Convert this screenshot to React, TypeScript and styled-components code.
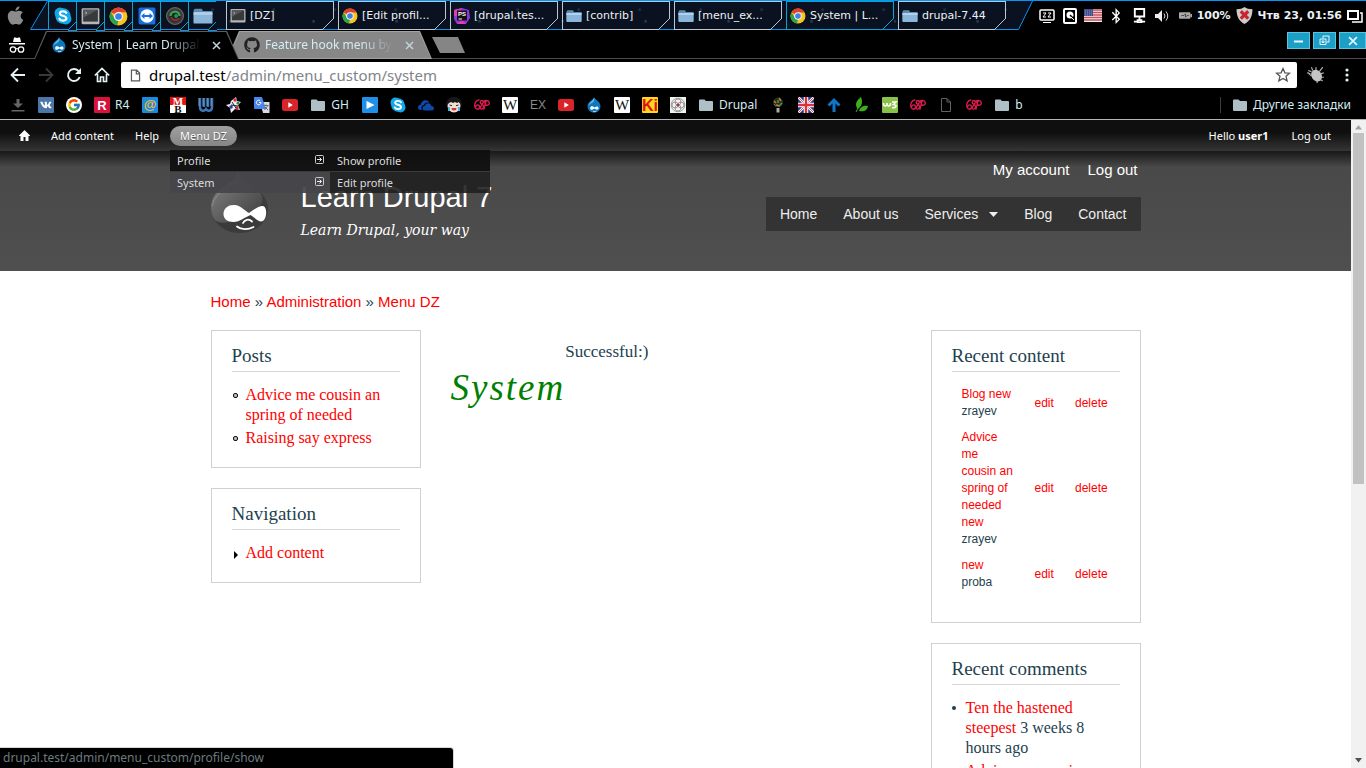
import React from 'react';
import styled, { createGlobalStyle } from 'styled-components';
import { FaApple, FaGithub, FaVk, FaBluetoothB } from 'react-icons/fa';
import { FcGoogle } from 'react-icons/fc';

const UI = '"Noto Sans", "Open Sans", sans-serif';
const ARIAL = '"Liberation Sans", Arial, sans-serif';
const SERIF = '"Liberation Serif", serif';
const PANEL = '"DejaVu Sans", Verdana, sans-serif';

const GlobalStyle = createGlobalStyle`
  *, *::before, *::after { box-sizing: border-box; }
  body { margin: 0; background: #fff; }
  button { margin: 0; padding: 0; border: 0; background: none; color: inherit; font: inherit; }
  a { text-decoration: none; color: inherit; }
  ul, h1, h2, p { margin: 0; padding: 0; font-weight: normal; }
  ul { list-style: none; }
  svg { display: block; flex: none; }
`;

const Desktop = styled.div`
  display: flex;
  flex-direction: column;
  height: 100vh;
  overflow: hidden;
  position: relative;
`;

/* ---------- desktop panel ---------- */

const Panel = styled.header`
  display: flex;
  height: 30px;
  flex: none;
  background: #000;
  border-top: 1px solid #0795f3;
  font: 11px/28px ${PANEL};
  color: #eaf2f5;
`;

const AppleButton = styled.button`
  width: 30px;
  display: grid;
  place-items: center;
  color: #8b8b8b;
`;

const TaskArea = styled.div`
  display: flex;
  min-width: 0;
  padding-right: 4px;
  border-bottom: 1px solid #0795f3;
  background:
    radial-gradient(circle at 20% 70%, #24364a 0 1px, transparent 2px) 0 0 / 83px 29px,
    radial-gradient(circle at 70% 30%, #1d2c40 0 1px, transparent 2px) 0 0 / 61px 29px,
    #0a1120;
`;

const Launchers = styled.div`
  display: flex;
  margin-right: 10px;
`;

const CutButton = styled.button<{ $edge: string; $cut: number }>`
  position: relative;
  display: flex;
  align-items: center;
  border: 1px solid ${(p) => p.$edge};
  height: 29px;
  &::after {
    content: '';
    position: absolute;
    right: -1px;
    bottom: -1px;
    width: ${(p) => p.$cut}px;
    height: ${(p) => p.$cut}px;
    background: linear-gradient(135deg, transparent calc(50% - 1px), ${(p) => p.$edge} calc(50% - 1px), ${(p) => p.$edge} 50%, #0a1120 50%);
    border-bottom: 1px solid #0795f3;
  }
`;

const Launcher = styled(CutButton)`
  width: 28px;
  justify-content: center;
  border-width: 1px 0 0 1px;
`;

const Task = styled(CutButton)`
  width: 108px;
  margin-right: 4px;
  padding-left: 3px;
  gap: 4px;
  white-space: nowrap;
`;

const Tray = styled.div`
  display: flex;
  align-items: center;
  margin-left: auto;
  padding-right: 3px;
  font-weight: bold;
  white-space: nowrap;
`;

const TraySlot = styled.span`
  width: 23px;
  display: grid;
  place-items: center;
`;

const TrayGroup = styled.span`
  display: flex;
  align-items: center;
  gap: 5px;
`;

/* ---------- browser chrome ---------- */

const TabStrip = styled.div`
  display: flex;
  flex: none;
  height: 29px;
  padding-top: 1px;
  background: #000;
  box-shadow: inset 0 -1px #4a4a4a;
  font: 12px/28px ${UI};
  color: #d3ecf3;
`;

const Incognito = styled.div`
  width: 34px;
  display: grid;
  place-items: center;
`;

const Tab = styled.div<{ $active?: boolean }>`
  position: relative;
  z-index: ${(p) => (p.$active ? 2 : 1)};
  display: flex;
  align-items: center;
  width: 205px;
  margin-right: ${(p) => (p.$active ? '-12px' : '0')};
  padding-left: 17px;
  &::before, &::after {
    content: '';
    position: absolute;
    inset: 0;
    z-index: -1;
    clip-path: polygon(12px 0, calc(100% - 12px) 0, 100% 100%, 0 100%);
    background: ${(p) => (p.$active ? '#5c5c5c' : '#a2a2a2')};
  }
  &::after {
    inset: 1px 1px ${(p) => (p.$active ? '0' : '1px')};
    background: ${(p) => (p.$active ? '#000' : '#878787')};
  }
`;

const TabTitle = styled.span`
  width: 129px;
  margin-left: 5px;
  overflow: hidden;
  white-space: nowrap;
  mask-image: linear-gradient(90deg, #000 74%, transparent);
`;

const TabClose = styled.button`
  margin-left: 11px;
  color: #c3d4d8;
`;

const NewTab = styled.button`
  width: 33px;
  height: 16px;
  margin-top: 6px;
  background: #858585;
  clip-path: polygon(0 0, 26px 0, 33px 100%, 8px 100%);
`;

const WindowButtons = styled.div`
  display: flex;
  gap: 3px;
  height: 17px;
  margin: 1px 0 0 auto;
`;

const WindowButton = styled.button<{ $wide?: boolean }>`
  width: ${(p) => (p.$wide ? 27 : 23)}px;
  display: grid;
  place-items: center;
  border: 1px solid #5cc2df;
  background: #1c9fc7;
  color: #e6f6fb;
`;

const Toolbar = styled.div`
  display: flex;
  flex: none;
  align-items: center;
  height: 32px;
  padding: 0 8px 0 4px;
  background: #000;
  color: #e2f1f4;
`;

const ToolButton = styled.button`
  width: 28px;
  height: 26px;
  display: grid;
  place-items: center;
  &:disabled { color: #363a3b; }
`;

const Omnibox = styled.label`
  position: relative;
  display: flex;
  align-items: center;
  flex: 1;
  height: 26px;
  margin: 0 5px;
  padding: 0 6px 0 8px;
  background: #fff;
  border-radius: 2px;
  color: #5a5a5a;
`;

const AddressText = styled.span`
  flex: 1;
  margin-left: 7px;
  font: 15px/24px ${UI};
  color: #808488;
  b { font-weight: normal; color: #000; }
`;

const AddressInput = styled.input`
  position: absolute;
  inset: 0 30px 0 28px;
  border: 0;
  background: transparent;
  color: transparent;
  font: 15px/24px ${UI};
  outline: none;
`;

const Bookmarks = styled.nav`
  display: flex;
  flex: none;
  align-items: center;
  gap: 12px;
  height: 29px;
  padding: 0 14px 0 10px;
  background: #000;
  border-bottom: 1px solid #b3b3b3;
  font: 12px/28px ${UI};
  color: #d3ecf3;
  white-space: nowrap;
`;

const Bookmark = styled.a`
  display: flex;
  align-items: center;
  gap: 5px;
  span { padding-right: 1px; }
`;

const OtherBookmarks = styled(Bookmark)`
  margin-left: auto;
  padding-left: 11px;
  height: 16px;
  line-height: 16px;
  border-left: 1px solid #3c3c3c;
`;

/* ---------- page ---------- */

const Viewport = styled.div`
  display: flex;
  flex: 1;
  min-height: 0;
`;

const Page = styled.div`
  flex: 1;
  min-width: 0;
  overflow: hidden;
  background: #fff;
  color: #233f50;
`;

const ScrollTrack = styled.div`
  display: flex;
  flex-direction: column;
  align-items: center;
  width: 15px;
  padding: 5px 0;
  background: #f1f1f1;
`;

const ScrollThumb = styled.div`
  width: 11px;
  height: 55%;
  margin: 3px 0 auto;
  background: #c1c1c1;
`;

const AdminBar = styled.nav`
  position: relative;
  z-index: 2;
  display: flex;
  align-items: center;
  gap: 1px;
  height: 31px;
  padding: 0 10px 0 9px;
  background: linear-gradient(#0f0f0f 40%, #353535);
  font: 11px/20px ${UI};
  color: #fff;
`;

const AdminLink = styled.a<{ $open?: boolean }>`
  display: flex;
  align-items: center;
  height: 20px;
  padding: 0 10px;
  border-radius: 10px;
  background: ${(p) => (p.$open ? 'linear-gradient(#a0a0a0, #858585)' : 'none')};
  text-shadow: ${(p) => (p.$open ? '0 1px #555' : 'none')};
`;

const AdminMenuItem = styled.div`
  position: relative;
`;

const DropMenu = styled.ul`
  position: absolute;
  top: 24px;
  left: 0;
  width: 160px;
  line-height: 22px;
  color: #ddd;
`;

const SubMenu = styled.ul`
  position: absolute;
  top: 0;
  left: 160px;
  width: 160px;
`;

const DropItem = styled.li<{ $tone: string }>`
  display: flex;
  justify-content: space-between;
  height: 22px;
  padding: 0 6px 0 7px;
  border-bottom: 1px solid rgba(70, 70, 70, 0.8);
  background: ${(p) => p.$tone};
  &:nth-child(2) { height: 21px; border-bottom: 0; }
  svg { margin-top: 5px; }
`;

const AccountLinks = styled.div`
  display: flex;
  gap: 3px;
  margin-left: auto;
`;

const SiteHeader = styled.header`
  height: 120px;
  background: linear-gradient(#181818, rgba(24, 24, 24, 0) 16px), linear-gradient(#484848, #4f4f4f);
`;

const Container = styled.div`
  width: 930px;
  max-width: 100%;
  margin: 0 auto;
`;

const Branding = styled(Container)`
  display: flex;
  padding-top: 19px;
  color: #fff;
`;

const SiteName = styled.div`
  margin-left: 33px;
  h1 { font: 29px/32px ${ARIAL}; margin-top: 11px; }
  p { font: italic 14px/20px "DejaVu Serif", serif; margin-top: 7px; }
`;

const HeaderMenus = styled.div`
  display: flex;
  flex-direction: column;
  align-items: flex-end;
  margin-left: auto;
`;

const UserMenu = styled.nav`
  display: flex;
  gap: 18px;
  margin: -9px 3px 18px 0;
  font: 15px/18px ${ARIAL};
`;

const MainMenu = styled.nav`
  display: flex;
  align-items: center;
  height: 34px;
  padding: 0 14px;
  gap: 26px;
  background: #333;
  color: #eee;
  font: 14px/34px ${ARIAL};
  a { display: flex; align-items: center; gap: 11px; }
`;

const Breadcrumb = styled(Container)`
  padding: 20px 0 18px;
  font: 15px/21px ${ARIAL};
`;

const RedLink = styled.a`
  color: #f00;
`;

const Columns = styled(Container)`
  display: grid;
  grid-template-columns: 210px minmax(0, 1fr) 210px;
  gap: 30px;
  align-items: start;
`;

const Sidebar = styled.aside`
  display: flex;
  flex-direction: column;
  gap: 20px;
`;

const Block = styled.section`
  border: 1px solid #d0d0d0;
  padding: 14px 20px 19px;
  font: 16px/20px ${SERIF};
  h2 {
    padding-bottom: 4px;
    border-bottom: 1px solid #d6d6d6;
    font: 19px/22px ${SERIF};
  }
  ul {
    display: flex;
    flex-direction: column;
    gap: 3px;
    margin-top: 13px;
  }
`;

const ListItem = styled.li`
  position: relative;
  padding-left: 14px;
  > svg { position: absolute; left: 0; top: 8px; }
`;

const ContentTable = styled.table`
  width: 100%;
  margin: 10px 0 7px;
  border-collapse: collapse;
  font: 12px/17px ${ARIAL};
  td { padding: 4px 10px 5px; vertical-align: middle; }
  td:first-child { width: 73px; }
  td + td { padding-right: 9px; }
`;

const Main = styled.main`
  display: flex;
  align-items: flex-start;
  padding-top: 10px;
  font: 17px/24px ${SERIF};
  h1 { margin-top: 28px; color: #008000; font: italic 37px/40px ${SERIF}; letter-spacing: 2px; }
`;

const StatusBubble = styled.div`
  position: absolute;
  left: 0;
  bottom: 0;
  width: 34%;
  max-width: 453px;
  height: 20px;
  padding-left: 3px;
  background: #000;
  border-radius: 0 3px 0 0;
  box-shadow: 0 0 0 1px #d5d5d5;
  color: #6d7a7e;
  font: 12px/19px ${UI};
  white-space: nowrap;
`;

/* ---------- drawings ---------- */

type S = { size?: number };

const Icon = ({ size = 16, vb = 16, children }: { size?: number; vb?: number; children: React.ReactNode }) => (
  <svg width={size} height={size} viewBox={`0 0 ${vb} ${vb}`} fill="none" aria-hidden="true">{children}</svg>
);

const Chrome = ({ size = 16 }: S) => (
  <Icon size={size}>
    <circle cx="8" cy="8" r="7.5" fill="#f8c51c" />
    <path d="M8 8 1.5 4.2A7.5 7.5 0 0 1 14.5 4.4H8z" fill="#e0402f" />
    <path d="M1.5 4.2 5 10 8 11.4 6.9 15.4A7.5 7.5 0 0 1 1.5 4.2z" fill="#2ba24c" />
    <circle cx="8" cy="8" r="3.8" fill="#f4f4f4" />
    <circle cx="8" cy="8" r="2.8" fill="#3f7fe8" />
  </Icon>
);

const Terminal = ({ size = 16 }: S) => (
  <Icon size={size}>
    <rect x=".5" y="1" width="15" height="13.5" rx="1" fill="#b7b7b7" />
    <rect x="1.8" y="2.3" width="12.4" height="10" fill="#37393b" />
    <path d="M1.8 2.3h12.4L1.8 9z" fill="#55585a" />
    <path d="m3.5 4 1.500 1-1.500 1" stroke="#bbb" strokeWidth=".7" />
  </Icon>
);

const BlueFolder = ({ size = 16 }: S) => (
  <Icon size={size}>
    <path d="M.5 3.2V13h15V4H8L7 2.2H1.5z" fill="#5b8db6" />
    <rect x=".5" y="5" width="15" height="9" fill="#8bb6da" />
    <path d="M.5 5h15v2H.5z" fill="#b3d2ea" />
  </Icon>
);

const SkypeMark = ({ size = 16 }: S) => (
  <Icon size={size}>
    <circle cx="5.4" cy="5.4" r="4.9" fill="#12a9ea" />
    <circle cx="10.6" cy="10.6" r="4.9" fill="#12a9ea" />
    <circle cx="8" cy="8" r="6.8" fill="#12a9ea" />
    <path d="M11 5.2C9.9 3.3 5.2 3.4 5.2 5.7c0 2.700 5.800 1.300 5.800 4.400 0 2.700-5.300 2.600-6.200.300" stroke="#fff" strokeWidth="1.900" strokeLinecap="round" />
  </Icon>
);

const TeamViewer = () => (
  <Icon size={18}>
    <rect x=".5" y=".5" width="15" height="15" rx="1.500" fill="#1470dc" />
    <circle cx="8" cy="8" r="6" fill="#fff" />
    <path d="m2.700 8 3-2.600v1.700h4.600V5.400l3 2.600-3 2.600V8.900H5.700v1.700z" fill="#1470dc" />
  </Icon>
);

const Camera = () => (
  <Icon size={18}>
    <circle cx="8" cy="8" r="7.500" fill="#3c3b3c" stroke="#676767" />
    <circle cx="8" cy="8" r="5" fill="#162a20" />
    <path d="M4 8a4 4 0 0 1 8 0" stroke="#41a349" strokeWidth="2" />
    <path d="M4.500 9a4 4 0 0 0 7 1" stroke="#a62d22" strokeWidth="1.500" />
    <circle cx="9" cy="8" r="1.700" fill="#258d86" />
  </Icon>
);

const Mark = ({ bg, fg, children, w = 'bold', family = ARIAL, fs = 12 }: { bg?: string; fg: string; children: string; w?: string; family?: string; fs?: number }) => (
  <Icon>
    {bg && <rect width="16" height="16" rx="1" fill={bg} />}
    <text x="8" y={8 + fs * 0.36} textAnchor="middle" fontSize={fs} fontWeight={w} fontFamily={family} fill={fg}>{children}</text>
  </Icon>
);

const PhpStorm = () => (
  <Icon>
    <path d="M0 2 8 0l7 2 1 8-4 6H3L0 11z" fill="#8d35dc" />
    <path d="M0 2 8 0 4 8H0zM12 16H3l5-4z" fill="#e13bb5" />
    <rect x="3" y="2.500" width="10" height="10" fill="#111" />
    <text x="8" y="8" textAnchor="middle" fontSize="6" fontWeight="bold" fontFamily={ARIAL} fill="#fff">PS</text>
    <path d="M4.500 11H8" stroke="#fff" />
  </Icon>
);

const GreyFolder = () => (
  <Icon><path d="M1 3.500A1 1 0 0 1 2 2.500h4.500L8 4h6a1 1 0 0 1 1 1v8a1 1 0 0 1-1 1H2a1 1 0 0 1-1-1z" fill="#afbfc6" /></Icon>
);

const YouTube = () => (
  <Icon><rect y="2" width="16" height="12" rx="2.500" fill="#d9252a" /><path d="m6.300 5.300 4.500 2.700-4.500 2.700z" fill="#fff" /></Icon>
);

const DrupalDrop = () => (
  <Icon>
    <path d="M8 .3C8.700 2.700 14.500 4 14.500 9.500A6.400 6.400 0 0 1 8 15.800 6.400 6.400 0 0 1 1.500 9.500C1.500 4.500 7.500 3 8 .3z" fill="#0d78bd" />
    <path d="M8 .3C8 4 3 5 2.500 9 4 5.500 10 6 8 .3z" fill="#75bde6" />
    <path d="M4.200 11.200c0-2.500 2.700-2.200 4.300-.7 1.700-1.300 4-1.700 4 .7 0 2-2.600 1.700-4 .4-1.600 1.500-4.300 1.700-4.300-.4z" fill="#fff" />
    <path d="M7 14.200c1 .5 2.300.5 3.300 0" stroke="#fff" strokeWidth=".8" />
  </Icon>
);

const Loops = () => (
  <Icon>
    <path d="M5 3C2 3 0 7 1 10s4 3 4.500.5S3.500 7 2 9M8 7C5.500 7 6 3.500 8 3.500s1.500 3-.5 5-1.500 4 .5 3.500 2-3.500 0-5M10 12l2-8c-2 0-1 3 0 4 2 1 4-1 3-3s-4-2-5-.5" stroke="#d81b4a" strokeWidth="1.400" strokeLinecap="round" />
  </Icon>
);

const Kaleido = () => (
  <Icon>
    <rect width="16" height="16" fill="#f2f2ee" />
    <g stroke="#777" strokeWidth=".7">
      <circle cx="8" cy="8" r="6.800" /><circle cx="8" cy="5" r="3" /><circle cx="8" cy="11" r="3" /><circle cx="5" cy="8" r="3" /><circle cx="11" cy="8" r="3" />
    </g>
    <circle cx="8" cy="8" r="1.300" fill="#bd3038" />
  </Icon>
);

const UkFlag = () => (
  <Icon>
    <rect width="16" height="16" fill="#26398c" />
    <path d="m0 0 16 16M16 0 0 16" stroke="#fff" strokeWidth="2.500" />
    <path d="m0 0 16 16M16 0 0 16" stroke="#d8333c" strokeWidth=".9" />
    <path d="M8 0v16M0 8h16" stroke="#fff" strokeWidth="4.500" />
    <path d="M8 0v16M0 8h16" stroke="#d8333c" strokeWidth="2.400" />
  </Icon>
);

const UsFlag = () => (
  <svg width="18" height="13" viewBox="0 0 18 13" aria-hidden="true">
    <rect width="18" height="13" fill="#eee" />
    <path d="M0 1h18M0 3.500h18M0 6h18M0 8.500h18M0 11h18" stroke="#c6505c" strokeWidth="1.300" />
    <rect width="9" height="7" fill="#3f4f8e" />
    <path d="M1 2h7M1 4h7M1 6h7" stroke="#a5aecd" strokeWidth=".7" strokeDasharray="1 1" />
  </svg>
);

const PageIcon = ({ color }: { color: string }) => (
  <Icon><path d="M3.500 1.500H9L12.500 5v9.500h-9zM9 1.500V5h3.500" stroke={color} /></Icon>
);

const AngleBox = () => (
  <svg width="9" height="9" viewBox="0 0 9 9" fill="none" aria-hidden="true">
    <rect x=".5" y=".5" width="8" height="8" rx="1" stroke="#ccc" />
    <path d="M2 4.500h4.500M4.500 2.500l2 2-2 2" stroke="#eee" />
  </svg>
);

const DrupalLogo = () => (
  <svg width="57" height="64" viewBox="0 0 57 64" aria-hidden="true">
    <defs>
      <linearGradient id="drop" x1="0" y1="0" x2="1" y2="1">
        <stop offset="0" stopColor="#868686" /><stop offset=".6" stopColor="#5a5a5a" /><stop offset="1" stopColor="#3c3c3c" />
      </linearGradient>
    </defs>
    <path d="M27 1c1 9 9 12 16 17 8 5 14 12 14 20 0 15-13 25-28.500 25S0 52 0 37c0-9 5-15 12-20C18 12 26 9 27 1z" fill="#3b3b3b" />
    <path d="M27 1c1 9 9 12 16 17 6 4 10 8 8 14-2 7-10 9-17 13C24 51 12 56 4 50 1 46 0 42 0 37c0-9 5-15 12-20C18 12 26 9 27 1z" fill="url(#drop)" />
    <path d="M27 2C26 16 5 18 1 36" fill="none" stroke="#a0a0a0" opacity=".6" />
    <path d="M12.500 44c0-6 5-9.500 11-9 6 .4 10 5.500 14.500 8 4.500-3 10-7.500 14-7 4.500 1 4 12 0 15-4 2-8-3.500-12.500-6C34 47 29 52 22.500 52c-6 0-10-3-10-8z" fill="#fff" />
    <path d="M32 53c1.500-3.500 6-4.500 9-1.500M26 56.500c4 3.500 11 3.500 16.500.5" fill="none" stroke="#fff" strokeWidth="1.800" strokeLinecap="round" />
  </svg>
);

const MailMark = () => (
  <Icon><rect width="16" height="16" rx="1" fill="#168de2" /><text x="8" y="12" textAnchor="middle" fontSize="13" fontWeight="bold" fontFamily={ARIAL} fill="#fcb52c">@</text></Icon>
);

const MbMark = () => (
  <Icon>
    <rect width="16" height="8" fill="#e01616" /><rect y="8" width="16" height="8" fill="#fff" />
    <text x="8" y="7.500" textAnchor="middle" fontSize="11" fontWeight="bold" fontFamily={SERIF} fill="#fff">M</text>
    <text x="8" y="15.500" textAnchor="middle" fontSize="11" fontWeight="bold" fontFamily={SERIF} fill="#111">B</text>
  </Icon>
);

const Download = () => (
  <Icon><path d="M6.500 2h3v4.500H13L8 11 3 6.500h3.500zM1.500 13h13v1.500h-13z" fill="#666" /></Icon>
);

const BlueW = () => (
  <Icon><path d="M2 1v9c0 4 4 5 6 2 2 3 6 2 6-2V1M6 1v9M10 1v9" stroke="#3f78b8" strokeWidth="2.500" /><path d="M1 1v8M5 1v8M9 1v8M13 1v8" stroke="#80aeda" strokeWidth=".8" /></Icon>
);

const Pinwheel = () => (
  <Icon>
    <path d="M5 4 10 0l1 4 4 1-3 3 2 5-5-1-4 4-1-5-4-3 4-1z" fill="#eee" />
    <circle cx="9" cy="3" r="1.700" fill="#db2556" /><circle cx="12" cy="6" r="1.600" fill="#278b3f" /><circle cx="5" cy="10" r="1.800" fill="#2639c5" /><circle cx="11" cy="11" r="1.700" fill="#cf2740" />
    <path d="m6 5 4 6M5 8l7 1" stroke="#222" />
  </Icon>
);

const Translate = () => (
  <Icon>
    <path d="M6 5h9.500v11H9z" fill="#d9dbdd" /><path d="M0 0h8l4 12H1a1 1 0 0 1-1-1z" fill="#4b86ee" />
    <path d="M7 5.500H5M7 5.500a2.300 2.300 0 1 1-.9-1.800" stroke="#fff" /><path d="M9.500 8.500h5M12 7.500v1M13.500 9l-3 4M11 10l3 3" stroke="#607080" />
  </Icon>
);

const Face = () => (
  <Icon>
    <circle cx="8" cy="9" r="6.500" fill="#f3ded2" /><path d="M0 9C0 2 4 0 8 0s8 2 8 9l-3-4-2 1-2-1-2 1-2-1-2 1z" fill="#15181a" />
    <path d="m3.500 8 2.500.7m6.500-.7-2.500.7" stroke="#222" /><path d="M5.500 11h5a2.500 2.500 0 0 1-5 0z" fill="#c83b3b" /><path d="M3 10v4m10-4v4" stroke="#47b6e2" strokeWidth="2" />
  </Icon>
);

const bookmarks: { name: string; icon: React.ReactNode; text?: string }[] = [
  { name: 'Downloads', icon: <Download /> },
  { name: 'VK', icon: <Icon><rect width="16" height="16" rx="1" fill="#4a76a8" /><FaVk x={2} y={2} size={12} color="#fff" /></Icon> },
  { name: 'Google', icon: <Icon><circle cx="8" cy="8" r="8" fill="#fff" /><FcGoogle x={1} y={1} size={14} /></Icon> },
  { name: 'R4', icon: <Mark bg="#d8113d" fg="#fff" fs={13}>R</Mark>, text: 'R4' },
  { name: 'Mail', icon: <MailMark /> },
  { name: 'MB', icon: <MbMark /> },
  { name: 'W', icon: <BlueW /> },
  { name: 'Pinwheel', icon: <Pinwheel /> },
  { name: 'Translate', icon: <Translate /> },
  { name: 'YouTube', icon: <YouTube /> },
  { name: 'GH', icon: <GreyFolder />, text: 'GH' },
  { name: 'Player', icon: <Icon><rect width="16" height="16" rx="1" fill="#1f8fe8" /><path d="m4.500 4 8 4-8 4z" fill="#fff" /></Icon> },
  { name: 'Skype', icon: <SkypeMark /> },
  { name: 'OneDrive', icon: <Icon><path d="M0 10.500C0 8.500 1.500 7.500 3 7.500c0-4 6-6 8.500-2-4-.5-5 1-5.500 2.500-2.500.3-3.200 3-2 5C1.500 13 0 12.500 0 10.500z" fill="#0d4aa8" /><path d="M4.500 11.500c0-1.500 1-2.500 2.500-2.700C7.500 5.500 13 5.500 13.300 9c1.800 0 2.700 1 2.700 2.300S15 13.500 14 13.500H6.800c-1.300 0-2.300-.8-2.300-2z" fill="#0d4aa8" /></Icon> },
  { name: 'Face', icon: <Face /> },
  { name: 'Loops', icon: <Loops /> },
  { name: 'Wikipedia', icon: <Mark bg="#fff" fg="#111" w="normal" family={SERIF} fs={15}>W</Mark> },
  { name: 'EX', icon: <Mark fg="#8b8b8b" w="normal" fs={12}>EX</Mark> },
  { name: 'YouTube channel', icon: <YouTube /> },
  { name: 'Drupal site', icon: <DrupalDrop /> },
  { name: 'Wiki', icon: <Mark bg="#fff" fg="#111" w="normal" family={SERIF} fs={15}>W</Mark> },
  { name: 'Ki', icon: <Mark bg="#ffd91a" fg="#e3101b" fs={16}>Ki</Mark> },
  { name: 'Pattern', icon: <Kaleido /> },
  { name: 'Drupal', icon: <GreyFolder />, text: 'Drupal' },
  { name: 'Ideas', icon: <Icon><circle cx="8" cy="5.500" r="5" fill="#26301f" /><path d="M4 4l2 2M9 1l2 3M6 8l4 1" stroke="#c97a31" strokeWidth="1.500" /><path d="M8 3v3M12 6l-2 2" stroke="#3aa34e" strokeWidth="1.500" /><path d="M4 7l2 2" stroke="#a34b9b" /><path d="M6.500 11h3v4.500h-3z" fill="#aaa" /></Icon> },
  { name: 'English', icon: <UkFlag /> },
  { name: 'Up', icon: <Icon><path d="m8 1 6.500 6.500-2 2-3-3V15h-3V6.500l-3 3-2-2z" fill="#0c77c8" /></Icon> },
  { name: 'Leaf', icon: <Icon><path d="M3 11C0 5 5 2 7 0c2 5 1 9-3 12z" fill="#3cb01c" /><path d="M5 14c1-5 6-6 9-5-1 5-5 6-9 5z" fill="#3cb01c" /><path d="M2 15 6 7" stroke="#3cb01c" /></Icon> },
  { name: 'w3', icon: <Icon><rect width="16" height="16" rx="1" fill="#8ac249" /><path d="M1.500 6c0 4 3.500 4 3.500 0 0 4 3.500 4 3.500 0M10 5h4l-2.500 2.500c4 0 3 4-1.500 3" stroke="#fff" strokeWidth="1.600" /></Icon> },
  { name: 'Loops two', icon: <Loops /> },
  { name: 'Document', icon: <PageIcon color="#626262" /> },
  { name: 'Loops three', icon: <Loops /> },
  { name: 'b', icon: <GreyFolder />, text: 'b' },
];

const Slant = ({ end }: { end?: boolean }) => (
  <svg width={end ? 19 : 18} height="29" viewBox={end ? '0 0 19 29' : '0 0 18 29'} aria-hidden="true">
    <path d={end ? 'M0 0h19L4 28H0z' : 'M18 0v29H.5z'} fill="#0a1120" />
    <path d={end ? 'M18.500 0 4.500 28.500H0' : 'M17.500 0 .5 28.500H18'} fill="none" stroke="#0795f3" strokeWidth="1" />
  </svg>
);

const CYAN = '#08a5d2';
const PALE = '#b9c9cf';

const launchers = [
  { name: 'Skype', icon: <SkypeMark size={18} /> },
  { name: 'Terminal', icon: <Terminal size={19} /> },
  { name: 'Chrome', icon: <Chrome size={19} /> },
  { name: 'TeamViewer', icon: <TeamViewer /> },
  { name: 'Camera', icon: <Camera /> },
  { name: 'Files', icon: <BlueFolder size={20} /> },
];

const tasks = [
  { text: '[DZ]', icon: <Terminal /> },
  { text: '[Edit profil...', icon: <Chrome /> },
  { text: '[drupal.tes...', icon: <PhpStorm /> },
  { text: '[contrib]', icon: <BlueFolder /> },
  { text: '[menu_ex...', icon: <BlueFolder /> },
  { text: 'System | L...', icon: <Chrome />, active: true },
  { text: 'drupal-7.44', icon: <BlueFolder /> },
];

const CloseX = ({ size = 9 }: S) => (
  <Icon size={size} vb={9}><path d="m1 1 7 7M8 1 1 8" stroke="currentColor" strokeWidth="1.500" /></Icon>
);

const Ring = () => (
  <svg width="8" height="6" viewBox="0 0 8 6" aria-hidden="true"><rect x="1.500" y=".5" width="4" height="4" rx="1.500" fill="#bbb" stroke="#111" /></svg>
);

function DesktopPanel() {
  return (
    <Panel>
      <AppleButton aria-label="Applications"><FaApple size={21} /></AppleButton>
      <Slant />
      <TaskArea>
        <Launchers>
          {launchers.map((l) => (
            <Launcher key={l.name} $edge={CYAN} $cut={9} aria-label={l.name}>{l.icon}</Launcher>
          ))}
        </Launchers>
        {tasks.map((t) => (
          <Task key={t.text} $edge={t.active ? CYAN : PALE} $cut={11}>{t.icon}<span>{t.text}</span></Task>
        ))}
      </TaskArea>
      <Slant end />
      <Tray>
        <TraySlot><Icon size={16}><rect x="1" y="2" width="14" height="10" rx="1" stroke="#fff" strokeWidth="1.500" /><path d="M4 5h3L4 9h3M9 5h3L9 9h3M4 14.500h8" stroke="#fff" /></Icon></TraySlot>
        <TraySlot><Icon size={16}><rect x="2" y="1" width="12" height="14" rx="1" stroke="#fff" strokeWidth="2" /><circle cx="8" cy="7" r="3.500" fill="#fff" /><path d="m8 7 4 4" stroke="#000" strokeWidth="1.500" /><path d="m9 9 3 3" stroke="#fff" /></Icon></TraySlot>
        <TraySlot><UsFlag /></TraySlot>
        <TraySlot><FaBluetoothB size={16} color="#fff" /></TraySlot>
        <TraySlot><Icon size={15}><path d="M3 1h10v8H3zM8 9v3M2 14.500h4M10 14.500h4M6 13h4v2.500H6z" stroke="#fff" strokeWidth="2" /></Icon></TraySlot>
        <TraySlot><Icon size={16}><path d="M1 6h3l4-4v12l-4-4H1z" fill="#eee" /><path d="M10 5.500q2 2.500 0 5M12 3.500q3.500 4.500 0 9" stroke="#ddd" /></Icon></TraySlot>
        <TraySlot><Icon size={13}><rect y="4" width="14" height="8" rx="1" fill="#aaa" /><path d="M14 6h2v4h-2z" fill="#aaa" /><path d="M3 8h3l2-2v4l2-2h2" stroke="#444" strokeWidth="1.200" /></Icon></TraySlot>
        <TrayGroup>
          <span>100%</span>
          <Icon size={17}><path d="M8 0c2 1.500 4 2 7.500 2 0 6-2 11-7.500 14C2.500 13 .5 8 .5 2 4 2 6 1.500 8 0z" fill="#ccc" /><path d="m4.500 4 7 7M11.500 4l-7 7" stroke="#c8252c" strokeWidth="3" /></Icon>
          <span>Чтв 23, 01:56</span>
          <Icon size={16}><path d="M1 3h10v8H1z" stroke="#fff" strokeWidth="2" /><path d="M13 5h2v9H5" stroke="#fff" strokeWidth="1.500" /></Icon>
        </TrayGroup>
      </Tray>
    </Panel>
  );
}

function BrowserChrome() {
  return (
    <>
      <TabStrip>
        <Incognito>
          <svg width="18" height="17" viewBox="0 0 18 17" fill="none" aria-label="Incognito">
            <path d="M5 5 6 .5h1.500L9 1l1.500-.5H12L13 5zM1 6h16v1.500H1z" fill="#fff" />
            <circle cx="5" cy="12.500" r="2.700" stroke="#fff" strokeWidth="1.300" /><circle cx="13" cy="12.500" r="2.700" stroke="#fff" strokeWidth="1.300" /><path d="M7.500 12q1.500-1 3 0" stroke="#fff" />
          </svg>
        </Incognito>
        <Tab $active>
          <DrupalDrop />
          <TabTitle>System | Learn Drupal 7</TabTitle>
          <TabClose aria-label="Close tab"><CloseX /></TabClose>
        </Tab>
        <Tab>
          <FaGithub size={16} color="#222" />
          <TabTitle>Feature hook menu by zr</TabTitle>
          <TabClose aria-label="Close tab"><CloseX /></TabClose>
        </Tab>
        <NewTab aria-label="New tab" />
        <WindowButtons>
          <WindowButton aria-label="Minimize"><Icon size={11} vb={11}><path d="M1 6.500h9" stroke="currentColor" strokeWidth="2" /></Icon></WindowButton>
          <WindowButton aria-label="Restore"><Icon size={11} vb={11}><path d="M4 3.500V1h6v6H7.500M1 4h6v5.500H1zM3 6h2v1.500H3z" stroke="currentColor" /></Icon></WindowButton>
          <WindowButton $wide aria-label="Close"><CloseX size={10} /></WindowButton>
        </WindowButtons>
      </TabStrip>
      <Toolbar>
        <ToolButton aria-label="Back"><Icon><path d="M15 8H2M8 1.500 1.500 8 8 14.500" stroke="currentColor" strokeWidth="1.800" /></Icon></ToolButton>
        <ToolButton aria-label="Forward" disabled><Icon><path d="M1 8h13M8 1.500 14.500 8 8 14.500" stroke="currentColor" strokeWidth="1.800" /></Icon></ToolButton>
        <ToolButton aria-label="Reload"><Icon><path d="M13.700 10A6 6 0 1 1 12.500 4L14 5.500" stroke="currentColor" strokeWidth="1.900" /><path d="M15 1v6H9z" fill="currentColor" /></Icon></ToolButton>
        <ToolButton aria-label="Home"><Icon><path d="M.8 8.500 8 1.500l7.200 7M3.500 7v7.500h3V10h3v4.500h3V7" stroke="currentColor" strokeWidth="1.700" /></Icon></ToolButton>
        <Omnibox>
          <Icon size={13}><path d="M3 1.500h6.500L13 5v9.500H3zM9 1.500V6h4" stroke="currentColor" strokeWidth="1.500" /></Icon>
          <AddressText><b>drupal.test</b>/admin/menu_custom/system</AddressText>
          <AddressInput aria-label="Address" type="text" />
          <Icon><path d="m8 1.500 1.900 4.300 4.600.4-3.500 3 1.100 4.600L8 11.400l-4.100 2.400L5 9.200l-3.500-3 4.600-.4z" stroke="#555" strokeWidth="1.300" /></Icon>
        </Omnibox>
        <ToolButton aria-label="Extension"><Icon size={18}><ellipse cx="8.500" cy="8.500" rx="4.500" ry="5.500" fill="#c5c5c5" transform="rotate(-35 8.500 8.500)" /><path d="M4 5 1 4M5 4 4 1M8 4V1M11 5l3-4M12 7l3-1M12 10h3M11 12l3 1M9 13v2M4 9 1 6M3 7 0 6" stroke="#b5b5b5" /></Icon></ToolButton>
        <ToolButton aria-label="Menu"><Icon><circle cx="11" cy="3" r="1.600" fill="currentColor" /><circle cx="11" cy="8" r="1.600" fill="currentColor" /><circle cx="11" cy="13" r="1.600" fill="currentColor" /></Icon></ToolButton>
      </Toolbar>
      <Bookmarks aria-label="Bookmarks">
        {bookmarks.map((b) => (
          <Bookmark key={b.name} href="#" aria-label={b.name}>{b.icon}{b.text && <span>{b.text}</span>}</Bookmark>
        ))}
        <OtherBookmarks href="#"><GreyFolder /><span>Другие закладки</span></OtherBookmarks>
      </Bookmarks>
    </>
  );
}

const contentRows = [
  { title: 'Blog new', author: 'zrayev' },
  { title: 'Advice me cousin an spring of needed new', author: 'zrayev' },
  { title: 'new', author: 'proba' },
];

export default function App() {
  return (
    <Desktop>
      <GlobalStyle />
      <DesktopPanel />
      <BrowserChrome />
      <Viewport>
        <Page>
          <AdminBar aria-label="Administration">
            <AdminLink href="#" aria-label="Site home"><Icon size={11} vb={11}><path d="M5.500 0 11 5.500V6H9.500v5h-3V7h-2v4h-3V6H0v-.5z" fill="#fff" /></Icon></AdminLink>
            <AdminLink href="#">Add content</AdminLink>
            <AdminLink href="#">Help</AdminLink>
            <AdminMenuItem>
              <AdminLink href="#" $open>Menu DZ</AdminLink>
              <DropMenu>
                <DropItem $tone="rgba(15, 15, 15, 0.93)"><a href="#">Profile</a><AngleBox /></DropItem>
                <DropItem $tone="rgba(69, 69, 74, 0.93)"><a href="#">System</a><AngleBox /></DropItem>
                <SubMenu>
                  <DropItem $tone="rgba(15, 15, 15, 0.93)"><a href="#">Show profile</a></DropItem>
                  <DropItem $tone="rgba(32, 32, 32, 0.9)"><a href="#">Edit profile</a></DropItem>
                </SubMenu>
              </DropMenu>
            </AdminMenuItem>
            <AccountLinks>
              <AdminLink href="#"><span>Hello <b>user1</b></span></AdminLink>
              <AdminLink href="#">Log out</AdminLink>
            </AccountLinks>
          </AdminBar>
          <SiteHeader>
            <Branding>
              <DrupalLogo />
              <SiteName>
                <h1>Learn Drupal 7</h1>
                <p>Learn Drupal, your way</p>
              </SiteName>
              <HeaderMenus>
                <UserMenu><a href="#">My account</a><a href="#">Log out</a></UserMenu>
                <MainMenu>
                  <a href="#">Home</a>
                  <a href="#">About us</a>
                  <a href="#">Services<svg width="9" height="5" viewBox="0 0 9 5" aria-hidden="true"><path d="M0 0h9L4.500 5z" fill="#eee" /></svg></a>
                  <a href="#">Blog</a>
                  <a href="#">Contact</a>
                </MainMenu>
              </HeaderMenus>
            </Branding>
          </SiteHeader>
          <Breadcrumb>
            <RedLink href="#">Home</RedLink> » <RedLink href="#">Administration</RedLink> » <RedLink href="#">Menu DZ</RedLink>
          </Breadcrumb>
          <Columns>
            <Sidebar>
              <Block>
                <h2>Posts</h2>
                <ul>
                  <ListItem><Ring /><RedLink href="#">Advice me cousin an spring of needed</RedLink></ListItem>
                  <ListItem><Ring /><RedLink href="#">Raising say express</RedLink></ListItem>
                </ul>
              </Block>
              <Block>
                <h2>Navigation</h2>
                <ul>
                  <ListItem><svg width="8" height="8" viewBox="0 0 8 8" aria-hidden="true"><path d="M2 0l4 4-4 4z" fill="#000" /></svg><RedLink href="#">Add content</RedLink></ListItem>
                </ul>
              </Block>
            </Sidebar>
            <Main>
              <h1>System</h1>
              <p>Successful:)</p>
            </Main>
            <Sidebar>
              <Block>
                <h2>Recent content</h2>
                <ContentTable>
                  <tbody>
                    {contentRows.map((r) => (
                      <tr key={r.title}>
                        <td><RedLink href="#">{r.title}</RedLink><div>{r.author}</div></td>
                        <td><RedLink href="#">edit</RedLink></td>
                        <td><RedLink href="#">delete</RedLink></td>
                      </tr>
                    ))}
                  </tbody>
                </ContentTable>
              </Block>
              <Block>
                <h2>Recent comments</h2>
                <ul>
                  <ListItem><svg width="4" height="4" viewBox="0 0 4 4" aria-hidden="true"><circle cx="2" cy="2" r="2" fill="#233f50" /></svg><RedLink href="#">Ten the hastened steepest</RedLink> 3 weeks 8 hours ago</ListItem>
                  <ListItem><RedLink href="#">Advice me cousin</RedLink></ListItem>
                </ul>
              </Block>
            </Sidebar>
          </Columns>
        </Page>
        <ScrollTrack>
          <svg width="7" height="5" viewBox="0 0 7 5" aria-hidden="true"><path d="M3.500 0 7 4.500H0z" fill="#a3a3a3" /></svg>
          <ScrollThumb />
          <svg width="7" height="5" viewBox="0 0 7 5" aria-hidden="true"><path d="M0 0h7L3.500 4.500z" fill="#505050" /></svg>
        </ScrollTrack>
      </Viewport>
      <StatusBubble>drupal.test/admin/menu_custom/profile/show</StatusBubble>
    </Desktop>
  );
}
